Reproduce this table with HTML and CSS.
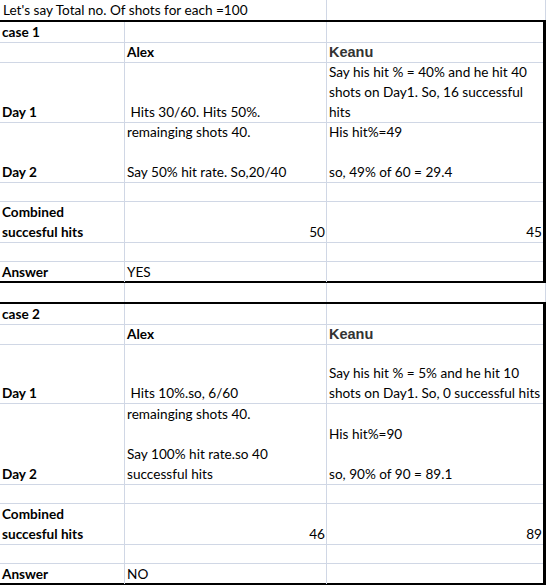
FILE: index.html
```html
<!DOCTYPE html>
<html lang="en">
  <head>
    <meta charset="UTF-8" />
    <meta name="viewport" content="width=device-width, initial-scale=1.0" />
    <title>Shots</title>
    <link rel="stylesheet" href="styles.css">
  </head>
  <body>
    <div class="sheet">
      <!-- header row, text spills over column B -->
      <div class="row top">
        <div class="cell wide">Let's say Total no. Of shots for each =100</div>
        <div class="cell edge"></div>
      </div>

      <!-- case 1 -->
      <div class="case">
        <div class="row h1">
          <div class="cell bold">case 1</div>
          <div class="cell"></div>
          <div class="cell"></div>
        </div>
        <div class="row h1">
          <div class="cell"></div>
          <div class="cell bold">Alex</div>
          <div class="cell name">Keanu</div>
        </div>
        <div class="row h3">
          <div class="cell bold">Day 1</div>
          <div class="cell">&nbsp;Hits 30/60. Hits 50%.</div>
          <div class="cell">Say his hit % = 40% and he hit 40<br>shots on Day1. So, 16 successful<br>hits</div>
        </div>
        <div class="row h3">
          <div class="cell bold">Day 2</div>
          <div class="cell">remainging shots 40.<br>&nbsp;<br>Say 50% hit rate. So,20/40</div>
          <div class="cell">His hit%=49<br>&nbsp;<br>so, 49% of 60 = 29.4</div>
        </div>
        <div class="row h1">
          <div class="cell"></div>
          <div class="cell"></div>
          <div class="cell"></div>
        </div>
        <div class="row h2">
          <div class="cell bold">Combined<br>succesful hits</div>
          <div class="cell num">50</div>
          <div class="cell num">45</div>
        </div>
        <div class="row h1">
          <div class="cell"></div>
          <div class="cell"></div>
          <div class="cell"></div>
        </div>
        <div class="row last">
          <div class="cell bold">Answer</div>
          <div class="cell">YES</div>
          <div class="cell"></div>
        </div>
      </div>

      <div class="row gap">
        <div class="cell"></div>
        <div class="cell"></div>
        <div class="cell edge"></div>
      </div>

      <!-- case 2 -->
      <div class="case">
        <div class="row h1">
          <div class="cell bold">case 2</div>
          <div class="cell"></div>
          <div class="cell"></div>
        </div>
        <div class="row h1">
          <div class="cell"></div>
          <div class="cell bold">Alex</div>
          <div class="cell name">Keanu</div>
        </div>
        <div class="row h3">
          <div class="cell bold">Day 1</div>
          <div class="cell">&nbsp;Hits 10%.so, 6/60</div>
          <div class="cell">Say his hit % = 5% and he hit 10<br>shots on Day1. So, 0 successful hits</div>
        </div>
        <div class="row h4">
          <div class="cell bold">Day 2</div>
          <div class="cell">remainging shots 40.<br>&nbsp;<br>Say 100% hit rate.so 40<br>successful hits</div>
          <div class="cell">His hit%=90<br>&nbsp;<br>so, 90% of 90 = 89.1</div>
        </div>
        <div class="row h1">
          <div class="cell"></div>
          <div class="cell"></div>
          <div class="cell"></div>
        </div>
        <div class="row h2">
          <div class="cell bold">Combined<br>succesful hits</div>
          <div class="cell num">46</div>
          <div class="cell num">89</div>
        </div>
        <div class="row h1">
          <div class="cell"></div>
          <div class="cell"></div>
          <div class="cell"></div>
        </div>
        <div class="row last">
          <div class="cell bold">Answer</div>
          <div class="cell">NO</div>
          <div class="cell"></div>
        </div>
      </div>
    </div>
  </body>
</html>
```

FILE: styles.css
```css
* {
  box-sizing: border-box;
}

body {
  margin: 0;
  background: #fff;
  font-family: "Lato", "Liberation Sans", sans-serif;
  font-size: 13.6px;
  color: #000;
  overflow: hidden;
}

.sheet {
  width: 546px;
}

.row {
  display: grid;
  grid-template-columns: 125px 202px 1fr;
}

.row.top {
  grid-template-columns: 327px 1fr;
  height: 20px;
}

.row.gap {
  height: 19px;
}

.h1 { height: 20px; }
.h2 { height: 40px; }
.h3 { height: 60px; }
.h4 { height: 80px; }
.last { height: 19px; }

.cell {
  display: flex;
  flex-direction: column;
  justify-content: flex-end;
  padding: 0 1px 0 2px;
  line-height: 20px;
  white-space: nowrap;
  border-right: 1px solid #d0d7e5;
  border-bottom: 1px solid #d0d7e5;
}

.top .cell,
.gap .cell,
.last .cell {
  border-bottom: none;
}

.top .wide {
  padding-left: 3px;
}

.case {
  border-top: 2px solid #000;
  border-bottom: 2px solid #000;
  border-right: 3px solid #000;
}

.case .cell:last-child {
  border-right: none;
}

.bold {
  font-weight: bold;
}

.name {
  font-family: "Liberation Sans", sans-serif;
  font-weight: bold;
  font-size: 14.5px;
  color: #333;
}

.num {
  text-align: right;
  align-items: flex-end;
}
```
